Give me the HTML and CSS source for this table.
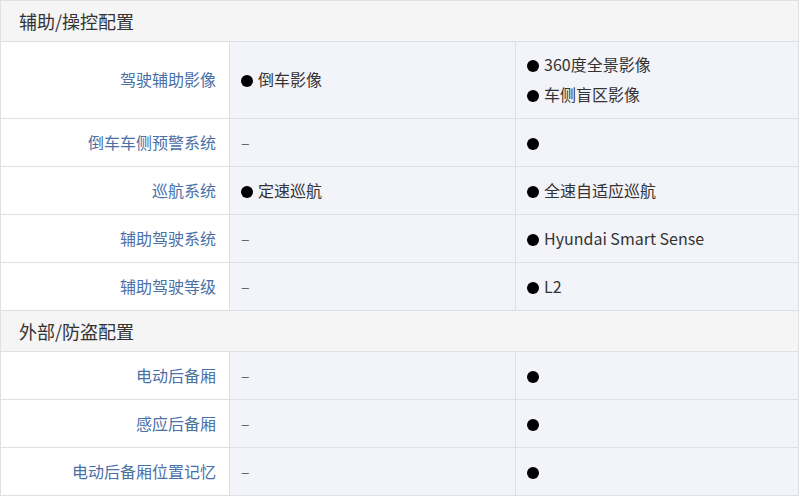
FILE: index.html
```html
<!DOCTYPE html>
<html lang="zh">
<head>
<meta charset="utf-8">
<link rel="stylesheet" href="styles.css">
</head>
<body>
<table class="spec">
  <colgroup><col class="c1"><col class="c2"><col class="c3"></colgroup>
  <tr class="sec"><td colspan="3">辅助/操控配置</td></tr>
  <tr class="tall">
    <th>驾驶辅助影像</th>
    <td><span class="dot"></span>倒车影像</td>
    <td><div class="line"><span class="dot"></span>360度全景影像</div><div class="line"><span class="dot"></span>车侧盲区影像</div></td>
  </tr>
  <tr><th>倒车车侧预警系统</th><td class="dash">–</td><td><span class="dot"></span></td></tr>
  <tr><th>巡航系统</th><td><span class="dot"></span>定速巡航</td><td><span class="dot"></span>全速自适应巡航</td></tr>
  <tr><th>辅助驾驶系统</th><td class="dash">–</td><td><span class="dot"></span>Hyundai Smart Sense</td></tr>
  <tr><th>辅助驾驶等级</th><td class="dash">–</td><td><span class="dot"></span>L2</td></tr>
  <tr class="sec"><td colspan="3">外部/防盗配置</td></tr>
  <tr><th>电动后备厢</th><td class="dash">–</td><td><span class="dot"></span></td></tr>
  <tr><th>感应后备厢</th><td class="dash">–</td><td><span class="dot"></span></td></tr>
  <tr><th>电动后备厢位置记忆</th><td class="dash">–</td><td><span class="dot"></span></td></tr>
</table>
</body>
</html>
```
FILE: styles.css
```css
html, body {
  margin: 0;
  padding: 0;
  background: #ffffff;
}
body {
  font-family: "Noto Sans CJK SC", "Noto Sans", sans-serif;
  color: #333333;
}
.spec {
  width: 798px;
  table-layout: fixed;
  border-collapse: collapse;
  border: 1px solid #dfe0e6;
}
.c1 { width: 229px; }
.c2 { width: 286px; }
.c3 { width: 283px; }
.spec td, .spec th {
  border: 1px solid #dfe0e6;
  height: 45px;
  padding: 0 12px 2px 11px;
  font-size: 16px;
  font-weight: normal;
  vertical-align: middle;
  line-height: 20px;
}
.spec th {
  background: #ffffff;
  color: #4a70a8;
  text-align: right;
  font-size: 16px;
  padding-right: 13px;
}
.spec td {
  background: #f3f3fa;
  text-align: left;
}
.spec .tall th, .spec .tall td { height: 74px; }
.spec .sec td {
  background: #f5f5f6;
  color: #333333;
  font-size: 18px;
  height: 39px;
  padding-left: 18px;
  padding-bottom: 1px;
  border-top: none;
}
.line { height: 30px; line-height: 30px; }
.dot {
  display: inline-block;
  width: 12px;
  height: 12px;
  border-radius: 50%;
  background: #000000;
  margin-right: 5px;
  vertical-align: -1px;
}
.dash { color: #666666; }
```
